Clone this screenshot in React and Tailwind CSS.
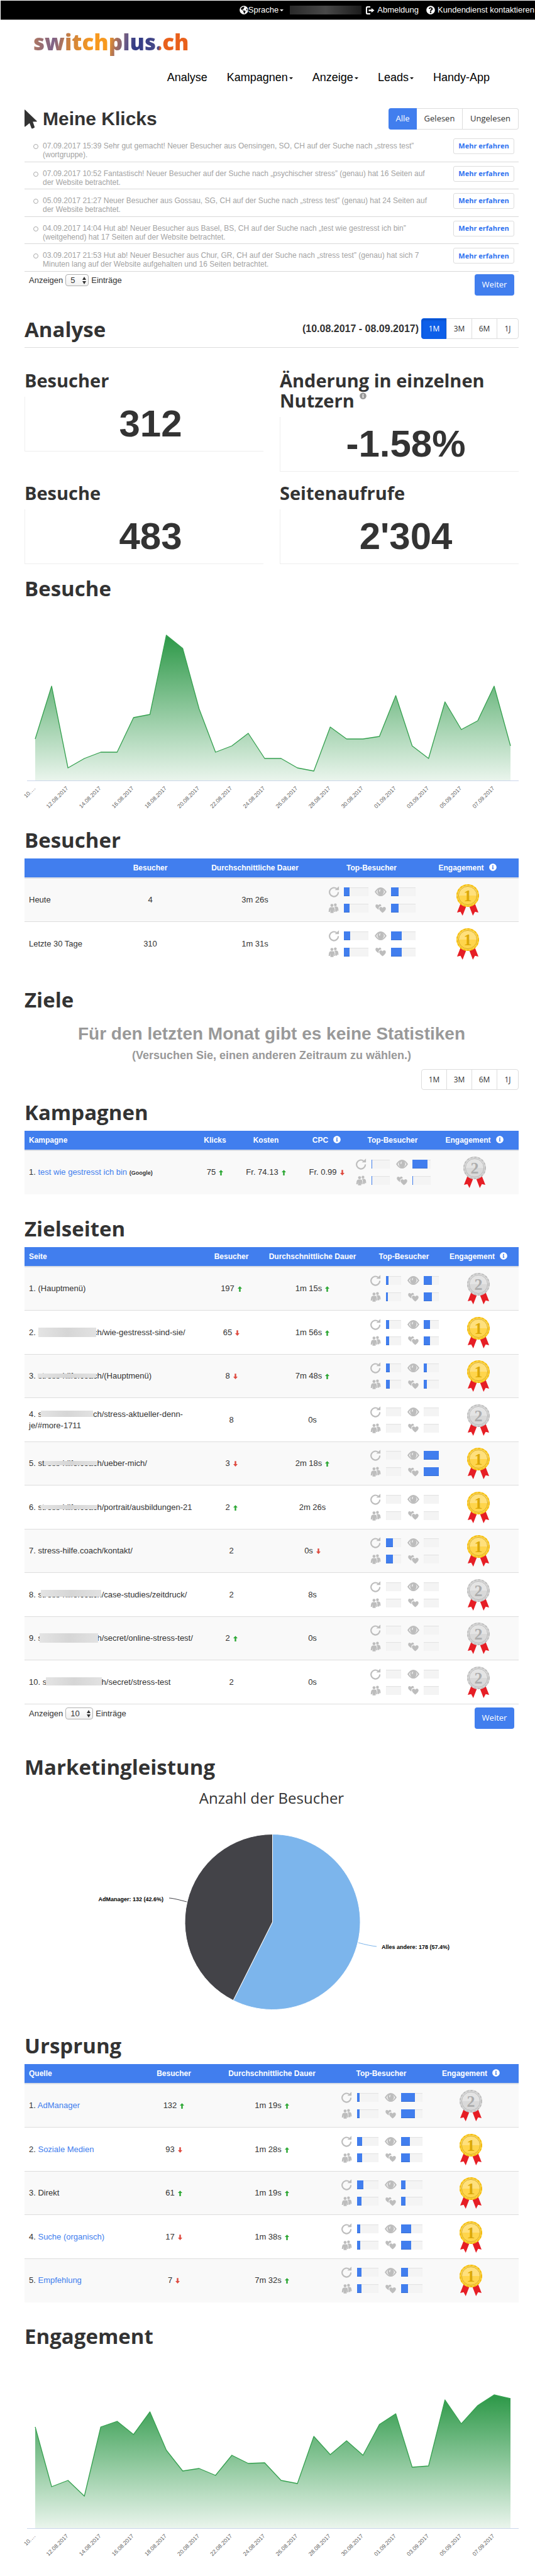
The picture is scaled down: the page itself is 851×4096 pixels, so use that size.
import React from "react";
import { FaGlobeAmericas, FaInfoCircle, FaQuestionCircle } from "react-icons/fa";

const clicks = [
  "07.09.2017 15:39 Sehr gut gemacht! Neuer Besucher aus Oensingen, SO, CH auf der Suche nach „stress test” (wortgruppe).",
  "07.09.2017 10:52 Fantastisch! Neuer Besucher auf der Suche nach „psychischer stress” (genau) hat 16 Seiten auf der Website betrachtet.",
  "05.09.2017 21:27 Neuer Besucher aus Gossau, SG, CH auf der Suche nach „stress test” (genau) hat 24 Seiten auf der Website betrachtet.",
  "04.09.2017 14:04 Hut ab! Neuer Besucher aus Basel, BS, CH auf der Suche nach „test wie gestresst ich bin” (weitgehend) hat 17 Seiten auf der Website betrachtet.",
  "03.09.2017 21:53 Hut ab! Neuer Besucher aus Chur, GR, CH auf der Suche nach „stress test” (genau) hat sich 7 Minuten lang auf der Website aufgehalten und 16 Seiten betrachtet.",
];

const axisDates = [
  "10.…", "12.08.2017", "14.08.2017", "16.08.2017", "18.08.2017", "20.08.2017", "22.08.2017", "24.08.2017",
  "26.08.2017", "28.08.2017", "30.08.2017", "01.09.2017", "03.09.2017", "05.09.2017", "07.09.2017",
];

/* Heights above the axis, in drawing units, one per day. */
const visitSeries = [
  66, 150, 20, 35, 45, 45, 100, 105, 231, 210, 114, 45, 55, 75, 35, 35, 20, 15, 85, 66, 66, 70, 135, 55, 35, 125, 81,
  95, 150, 55,
];
const engagementSeries = [
  161, 66, 76, 51, 161, 170, 149, 185, 124, 91, 95, 84, 116, 103, 104, 76, 71, 146, 117, 139, 116, 165, 182, 97, 99,
  204, 166, 195, 212, 206,
];

function Caret() {
  return (
    <svg viewBox="0 0 8 4" className="ml-[2px] w-[6px] h-[3px] inline-block align-middle" aria-hidden="true">
      <path d="M0 0h8L4 4z" fill="currentColor" />
    </svg>
  );
}

function LogOutIcon() {
  return (
    <svg viewBox="0 0 16 16" className="w-[15px] h-[15px]" fill="currentColor" aria-hidden="true">
      <path d="M8.500 1H3.500Q1 1 1 3.500v9Q1 15 3.500 15H8.500V12.800H4.200Q3.200 12.800 3.200 11.800V4.200Q3.200 3.200 4.200 3.200H8.500zM10.500 4.200V6.700H5.800v2.600h4.700v2.500L15.500 8z" />
    </svg>
  );
}

function CursorIcon() {
  return (
    <svg viewBox="0 0 20 31" className="w-5 h-[31px] shrink-0" fill="#333333" aria-hidden="true">
      <path d="M0 0.800Q0 0 .8.500L19.600 18.500Q20.200 19.500 19 19.500H13.200L16 27.800Q16.300 28.800 15.300 29.300L12.500 30.500Q11.500 30.800 11 29.800L8 21.800 1.300 27.300Q0 28 0 26.800z" />
    </svg>
  );
}

function RefreshIcon() {
  return (
    <svg viewBox="0 0 20 20" className="w-[18px] h-[18px]" aria-hidden="true">
      <path d="M14.800 4.300A7.800 7.800 0 1 0 18 10.500" fill="none" stroke="#bdbdbd" strokeWidth="2.400" />
      <path d="M19 .3V7H11.800z" fill="#bdbdbd" />
    </svg>
  );
}

function EyeIcon() {
  return (
    <svg viewBox="0 0 22 18" className="w-[19px] h-[16px]" aria-hidden="true">
      <path d="M0 9Q5 .8 11 .8T22 9Q17 17.200 11 17.200T0 9z" fill="#bdbdbd" />
      <path d="M3 9Q5.200 5.200 7.500 4.200A6 6 0 0 0 11 15Q6 15 3 9zM19 9Q16.800 5.200 14.500 4.200A6 6 0 0 1 11 15Q16 15 19 9z" fill="#f9f9f9" />
      <circle cx="11" cy="8.300" r="5" fill="#bdbdbd" />
      <path d="M10.800 4.200Q8 4.800 8.300 8Q9 9.300 10 8.200Q9.600 6 10.800 4.200z" fill="#f4f4f4" />
    </svg>
  );
}

function PeopleIcon() {
  return (
    <svg viewBox="0 0 20 18" className="w-[17px] h-[16px]" fill="#bdbdbd" aria-hidden="true">
      <circle cx="13.400" cy="2.800" r="2.600" />
      <path d="M12 6H16.200Q18.600 6.500 19 10L19.300 14H17.200L17 10.500 16.800 15.500H13.200V9.800Q13 7.500 11.400 6.500z" />
      <circle cx="7" cy="3.800" r="2.800" />
      <path d="M4.500 7.300H9.500Q12 7.500 12.300 11L12.500 16H10.600L10.300 11.500 10 18H4.200L3.800 11.500 3.300 16H.8L1.400 11Q1.900 7.600 4.500 7.300z" />
    </svg>
  );
}

function HeartsIcon() {
  return (
    <svg viewBox="0 0 20 17" className="w-[17px] h-[15px]" fill="#bdbdbd" aria-hidden="true">
      <path d="M6.300 11Q.2 7.200 .2 3.700Q.4 .8 3 .8Q5.200 .8 5.800 2.600Q6.600 .5 8.900 .6Q11 .9 11.200 3.300L11 4.200Q6.500 4.300 6.300 8.500z" />
      <path d="M13.500 16.600Q7.200 12 7.200 8.600Q7.400 5.600 10.300 5.500Q12.600 5.500 13.500 7.500Q14.500 5.400 16.800 5.500Q19.700 5.800 19.800 8.700Q19.600 12.200 13.500 16.600z" />
    </svg>
  );
}

function Medal({ place }) {
  const gold = place === 1;
  const rim = gold ? "#fbcf33" : "#d3d3d3";
  const dash = gold ? "#f3b90f" : "#bcbcbc";
  const face = gold ? "#ffd54c" : "#d9d9d9";
  const light = gold ? "#ffe07c" : "#e4e4e4";
  const ring = gold ? "#d8ad26" : "#b9b9b9";
  const digit = gold ? "#dba808" : "#adadad";
  return (
    <svg viewBox="0 0 36 50" className="mx-auto w-9 h-[50px] block" role="img" aria-label={`Platz ${place}`}>
      <path d="M6.500 31L1 45L6.500 43.700L9.800 50L16 34z" fill="#e61e25" />
      <path d="M29.500 31L35 45L29.500 43.700L26.200 50L20 34z" fill="#e61e25" />
      <circle cx="18" cy="18" r="18" fill={rim} />
      <circle cx="18" cy="18" r="17" fill="none" stroke={dash} strokeWidth="1.800" strokeDasharray="3 3.100" />
      <circle cx="18" cy="18" r="15.500" fill={face} />
      <path d="M2.500 18A15.500 15.500 0 0 1 33.500 18z" fill={light} />
      <circle cx="18" cy="18" r="14.600" fill="none" stroke={ring} strokeWidth="1" />
      <text x="18" y="27" textAnchor="middle" fontSize="26" fontWeight="700" fontFamily="'Liberation Serif', serif" fill={digit}>
        {place}
      </text>
    </svg>
  );
}

function Trend({ dir }) {
  const up = dir === "up";
  return (
    <svg viewBox="0 0 8 10" className="ml-[5px] w-[7px] h-[9px] inline-block align-[-1px]" role="img" aria-label={up ? "steigend" : "fallend"}>
      <path d={up ? "M4 0L8 4.500H5.400V10H2.600V4.500H0z" : "M4 10L0 5.500H2.600V0H5.400V5.500H8z"} fill={up ? "#2ea836" : "#de4a3f"} />
    </svg>
  );
}

function Value({ children, trend }) {
  return (
    <td className="p-0 text-center whitespace-nowrap">
      {children}
      {trend && <Trend dir={trend} />}
    </td>
  );
}

function Meter({ value, barClass }) {
  return (
    <div className={`${barClass} h-[14px] bg-[#f4f4f4] shadow-[inset_0_1px_1px_#e2e2e2]`} role="meter" aria-valuenow={value}>
      <div className="h-full bg-[#417eee] shadow-[inset_0_-1px_0_#3a70d3]" style={{ width: `${value}%` }} />
    </div>
  );
}

function TopVisitors({ values, barClass }) {
  const icons = [RefreshIcon, EyeIcon, PeopleIcon, HeartsIcon];
  return (
    <td className="p-0">
      <div className="grid grid-cols-[auto_auto] justify-center gap-x-[10px] gap-y-[12px]">
        {icons.map((Icon, i) => (
          <div key={i} className="flex items-center gap-[7px] h-[14px]">
            <span className="w-[19px] flex justify-center"><Icon /></span>
            <Meter value={values[i]} barClass={barClass} />
          </div>
        ))}
      </div>
    </td>
  );
}

function H2({ children }) {
  return <h2 className="font-['Open_Sans',sans-serif] font-bold text-[33px] leading-[40px]">{children}</h2>;
}

function PeriodButtons({ active }) {
  return (
    <div className="flex font-['Open_Sans',sans-serif] text-[12px]">
      {["1M", "3M", "6M", "1J"].map((label, i) => (
        <button
          key={label}
          type="button"
          className={`h-[33px] border -ml-px first:ml-0 first:rounded-l-[4px] last:rounded-r-[4px] ${
            i === 3 ? "w-[35px]" : "w-[41px]"
          } ${active === label ? "bg-[#0d5fe9] border-[#0d5fe9] text-white shadow-[inset_0_2px_3px_#0a4fc4]" : "bg-white border-[#dddddd]"}`}
        >
          {label}
        </button>
      ))}
    </div>
  );
}

function Pager({ id, size, selectClass }) {
  return (
    <div className="flex items-start justify-between pl-[7px] pr-[7px]">
      <div className="flex items-center gap-1 text-[13px] h-[19px]">
        <label htmlFor={id}>Anzeigen</label>
        <span className="relative">
          <select
            id={id}
            defaultValue={size}
            className={`${selectClass} block h-[19px] appearance-none rounded-[4px] border border-[#b0b0b0] bg-linear-to-b from-white to-[#f1f1f1] pl-[7px] text-[13px] leading-[16px]`}
          >
            <option>5</option>
            <option>10</option>
            <option>25</option>
          </select>
          <svg viewBox="0 0 6 12" className="absolute right-1 top-1 w-[6px] h-3 pointer-events-none" aria-hidden="true">
            <path d="M3 0L6 5H0zM3 12L0 7H6z" fill="#333333" />
          </svg>
        </span>
        <span>Einträge</span>
      </div>
      <button type="button" className="w-[63px] h-[34px] rounded-[4px] bg-[#417eee] text-white font-['Open_Sans',sans-serif] text-[13px]">
        Weiter
      </button>
    </div>
  );
}

function Info() {
  return <FaInfoCircle className="inline-block ml-2 mb-1 w-3 h-3" aria-label="Info" />;
}

function DataTable({ cols, heads, children }) {
  return (
    <table className="mt-[9px] w-full table-fixed border-separate border-spacing-0 text-[13px] leading-[18px]">
      <colgroup>
        {cols.map((c, i) => (
          <col key={i} className={c} />
        ))}
      </colgroup>
      <thead>
        <tr className="h-[32px] bg-[#417eee] text-white text-[12px]">
          {heads.map((h, i) => (
            <th
              key={i}
              scope="col"
              className={`p-0 font-bold whitespace-nowrap border-b-2 border-[#d8dce4] ${i === 0 ? "text-left pl-[7px]" : "text-center"}`}
            >
              {h}
              {(h === "Engagement" || h === "CPC") && <Info />}
            </th>
          ))}
        </tr>
      </thead>
      <tbody>{children}</tbody>
    </table>
  );
}

function Row({ children }) {
  return <tr className="odd:h-[69px] even:h-[70px] odd:bg-[#f9f9f9] *:border-b *:border-[#dddddd]">{children}</tr>;
}

function RowPlain({ children }) {
  return (
    <tr className="odd:h-[69px] even:h-[70px] odd:bg-[#f9f9f9] *:border-b *:border-[#dddddd] last:*:border-transparent">{children}</tr>
  );
}

function First({ children }) {
  return <td className="p-0 pl-[7px] pr-2">{children}</td>;
}

function MedalCell({ place }) {
  return (
    <td className="p-0">
      <Medal place={place} />
    </td>
  );
}

function AreaChart({ id, data, label }) {
  const step = 26.07;
  const base = 285;
  const pts = data.map((v, i) => `${(17 + i * step).toFixed(1)} ${base - v}`);
  const last = (17 + (data.length - 1) * step).toFixed(1);
  return (
    <svg viewBox="0 0 786 340" className="block w-full overflow-visible" role="img" aria-label={label}>
      <defs>
        <linearGradient id={id} x1="0" y1="0" x2="0" y2="1">
          <stop offset="0" stopColor="#2c9847" />
          <stop offset="1" stopColor="#2c9847" stopOpacity="0.100" />
        </linearGradient>
      </defs>
      <path d={`M17 ${base}L${pts.join("L")}L${last} ${base}z`} fill={`url(#${id})`} />
      <path d={`M${pts.join("L")}`} fill="none" stroke="#35a04f" strokeWidth="1.300" strokeLinejoin="round" />
      <path d="M4 285.500H786" stroke="#ccd6eb" strokeWidth="1" />
      {axisDates.map((d, i) => {
        const x = (18 + i * 2 * step).toFixed(1);
        return (
          <text key={d} x={x} y="298" textAnchor="end" fontSize="9" fill="#666666" transform={`rotate(-45 ${x} 298)`}>
            {d}
          </text>
        );
      })}
    </svg>
  );
}

function StatCard({ title, value, info }) {
  return (
    <div>
      <h3 className="font-['Open_Sans',sans-serif] font-bold text-[29px] leading-[32px]">
        {title}
        {info && <FaInfoCircle className="inline-block ml-2 w-[11px] h-[11px] align-[13px] text-[#999999]" aria-label="Info" />}
      </h3>
      <div className="mt-[10px] h-[87px] flex items-center justify-center pl-5 border-l border-b border-[#eeeeee] font-bold text-[60px] leading-none">
        {value}
      </div>
    </div>
  );
}

function Masked({ cover }) {
  return (
    <span className="relative">
      stress-hilfe.coach
      <span className={`absolute ${cover} bg-linear-to-r from-[#e4e4e4] via-[#d6d6d6] to-[#e2e2e2]`} />
    </span>
  );
}

const pages = [
  { n: 1, path: "(Hauptmenü)", v: "197", vt: "up", d: "1m 15s", dt: "up", m: [20, 58, 15, 58], p: 2 },
  { n: 2, cover: "left-px top-0 w-[92px] h-[15px]", path: "/wie-gestresst-sind-sie/", v: "65", vt: "down", d: "1m 56s", dt: "up", m: [22, 44, 22, 44], p: 1 },
  { n: 3, cover: "left-0 top-1 w-[93px] h-[7px]", path: "/(Hauptmenü)", v: "8", vt: "down", d: "7m 48s", dt: "up", m: [26, 24, 26, 24], p: 1 },
  { n: 4, cover: "left-[5px] top-[2px] w-[83px] h-[10px]", path: "/stress-aktueller-denn-", rest: "je/#more-1711", v: "8", d: "0s", m: [0, 0, 0, 0], p: 2 },
  { n: 5, cover: "left-[10px] top-1 w-[84px] h-[7px]", path: "/ueber-mich/", v: "3", vt: "down", d: "2m 18s", dt: "up", m: [0, 100, 0, 100], p: 1 },
  { n: 6, cover: "left-[5px] top-1 w-[90px] h-[7px]", path: "/portrait/ausbildungen-21", v: "2", vt: "up", d: "2m 26s", m: [0, 0, 0, 0], p: 1 },
  { n: 7, path: "stress-hilfe.coach/kontakt/", v: "2", d: "0s", dt: "down", m: [48, 0, 48, 0], p: 1 },
  { n: 8, cover: "left-[5px] top-0 w-[96px] h-[11px]", path: "/case-studies/zeitdruck/", v: "2", d: "8s", m: [0, 0, 0, 0], p: 2 },
  { n: 9, cover: "left-[3px] top-0 w-[93px] h-[15px]", path: "/secret/online-stress-test/", v: "2", vt: "up", d: "0s", m: [0, 0, 0, 0], p: 2 },
  { n: 10, cover: "left-[5px] top-0 w-[89px] h-[13px]", path: "/secret/stress-test", v: "2", d: "0s", m: [0, 0, 0, 0], p: 2 },
];

const sources = [
  { n: 1, name: "AdManager", link: true, v: "132", vt: "up", d: "1m 19s", m: [14, 66, 14, 66], p: 2 },
  { n: 2, name: "Soziale Medien", link: true, v: "93", vt: "down", d: "1m 28s", m: [26, 43, 26, 43], p: 1 },
  { n: 3, name: "Direkt", v: "61", vt: "up", d: "1m 19s", m: [32, 21, 23, 21], p: 1 },
  { n: 4, name: "Suche (organisch)", link: true, v: "17", vt: "down", d: "1m 38s", m: [17, 48, 17, 48], p: 1 },
  { n: 5, name: "Empfehlung", link: true, v: "7", vt: "down", d: "7m 32s", m: [21, 33, 21, 33], p: 1 },
];

export default function App() {
  return (
    <div className="bg-white text-[#333333] font-['Liberation_Sans',sans-serif]">
      <div className="pt-px pl-px">
        <div className="h-[31px] bg-black border-b border-[#bbbbbb] text-white text-[13px] flex items-center justify-end whitespace-nowrap pr-px">
          <button type="button" className="flex items-center">
            <FaGlobeAmericas className="w-[14px] h-[14px]" />
            Sprache
            <Caret />
          </button>
          <span className="ml-[10px] w-[114px] h-[14px] bg-linear-to-r from-[#2a2a2a] via-[#484848] to-[#1c1c1c]" />
          <a href="#abmeldung" className="ml-[6px] flex items-center gap-1">
            <LogOutIcon />
            Abmeldung
          </a>
          <a href="#kundendienst" className="ml-3 flex items-center gap-1">
            <FaQuestionCircle className="w-[14px] h-[14px]" />
            Kundendienst kontaktieren
          </a>
        </div>
      </div>

      <div className="pl-[39px] pr-[26px]">
        <header className="pt-[12px]">
          <a
            href="#start"
            className="ml-[14px] inline-block font-['Open_Sans',sans-serif] font-extrabold text-[35px] leading-[46px] text-transparent bg-clip-text bg-[linear-gradient(100deg,#b57a5c_0%,#7f6288_14%,#c87f42_23%,#f7991f_38%,#f7991f_48%,#a8705c_53%,#6a5a86_59%,#2f3a86_65%,#4a4a88_80%,#e9601b_81%,#e9601b_100%)]"
          >
            switchplus.ch
          </a>
          <nav className="mt-[22px] pr-[46px] flex justify-end gap-[31px] text-[18px] leading-[22px] text-black">
            <a href="#analyse">Analyse</a>
            <a href="#kampagnen">Kampagnen<Caret /></a>
            <a href="#anzeige">Anzeige<Caret /></a>
            <a href="#leads">Leads<Caret /></a>
            <a href="#app">Handy-App</a>
          </nav>
        </header>

        <section className="mt-[38px]">
          <div className="flex items-center justify-between">
            <div className="flex items-center gap-[9px]">
              <CursorIcon />
              <h1 className="font-bold text-[30px] leading-[34px]">Meine Klicks</h1>
            </div>
            <div className="flex h-[34px] font-['Open_Sans',sans-serif] text-[13px]">
              <button type="button" className="w-[45px] rounded-l-[4px] bg-[#417eee] text-white">Alle</button>
              <button type="button" className="w-[73px] border border-l-0 border-[#dddddd]">Gelesen</button>
              <button type="button" className="w-[89px] rounded-r-[4px] border border-l-0 border-[#dddddd]">Ungelesen</button>
            </div>
          </div>
          <ul className="mt-[8px] h-[218px] grid auto-rows-fr">
            {clicks.map((c) => (
              <li key={c} className="flex items-start border-b border-[#d9d9d9] pt-[6px] pl-[14px] pr-[7px]">
                <span className="mt-[9px] w-2 h-2 rounded-full border border-[#aaaaaa] shrink-0" />
                <p className="ml-[7px] mt-[5px] flex-1 max-w-[620px] text-[12px] leading-[14px] text-[#a3a3a3]">{c}</p>
                <button
                  type="button"
                  className="ml-auto w-[97px] h-[25px] shrink-0 rounded-[3px] border border-[#dddddd] text-[#2f73f0] font-['Open_Sans',sans-serif] font-bold text-[11px]"
                >
                  Mehr erfahren
                </button>
              </li>
            ))}
          </ul>
          <div className="mt-1"><Pager id="clicks-size" size="5" selectClass="w-[37px]" /></div>
        </section>

        <section className="mt-[34px]">
          <div className="h-[49px] flex items-start justify-between border-b border-[#dddddd]">
            <H2>Analyse</H2>
            <div className="mt-[2px] flex items-center gap-1">
              <span className="font-bold text-[16px]">(10.08.2017 - 08.09.2017)</span>
              <PeriodButtons active="1M" />
            </div>
          </div>
          <div className="mt-[36px] grid grid-cols-2 gap-x-[26px] gap-y-[18px]">
            <StatCard title="Besucher" value="312" />
            <StatCard title="Änderung in einzelnen Nutzern" value="-1.58%" info />
            <StatCard title="Besuche" value="483" />
            <StatCard title="Seitenaufrufe" value="2'304" />
          </div>
        </section>

        <section className="mt-[19px]">
          <H2>Besuche</H2>
          <AreaChart id="fill-visits" data={visitSeries} label="Besuche pro Tag" />
        </section>

        <section className="mt-[20px]">
          <H2>Besucher</H2>
          <DataTable
            cols={["w-[148px]", "w-[104px]", "w-[229px]", "w-[142px]", "w-[163px]"]}
            heads={["", "Besucher", "Durchschnittliche Dauer", "Top-Besucher", "Engagement"]}
          >
            <RowPlain>
              <First>Heute</First>
              <Value>4</Value>
              <Value>3m 26s</Value>
              <TopVisitors values={[24, 32, 24, 32]} barClass="w-[39px]" />
              <MedalCell place={1} />
            </RowPlain>
            <RowPlain>
              <First>Letzte 30 Tage</First>
              <Value>310</Value>
              <Value>1m 31s</Value>
              <TopVisitors values={[25, 43, 24, 43]} barClass="w-[39px]" />
              <MedalCell place={1} />
            </RowPlain>
          </DataTable>
        </section>

        <section className="mt-[34px]">
          <H2>Ziele</H2>
          <p className="mt-[18px] text-center font-bold text-[28px] leading-[32px] text-[#999999]">
            Für den letzten Monat gibt es keine Statistiken
          </p>
          <p className="mt-[6px] text-center font-bold text-[18px] leading-[24px] text-[#999999]">
            (Versuchen Sie, einen anderen Zeitraum zu wählen.)
          </p>
          <div className="mt-[10px] flex justify-end"><PeriodButtons /></div>
        </section>

        <section className="mt-[16px]">
          <H2>Kampagnen</H2>
          <DataTable
            cols={["w-[273px]", "w-[60px]", "w-[102px]", "w-[91px]", "w-[119px]", "w-[141px]"]}
            heads={["Kampagne", "Klicks", "Kosten", "CPC", "Top-Besucher", "Engagement"]}
          >
            <RowPlain>
              <First>
                1. <a href="#kampagne-1" className="text-[#417eee]">test wie gestresst ich bin</a>{" "}
                <b className="text-[9px]">(Google)</b>
              </First>
              <Value trend="up">75</Value>
              <Value trend="up">Fr. 74.13</Value>
              <Value trend="down">Fr. 0.99</Value>
              <TopVisitors values={[5, 86, 5, 5]} barClass="w-[29px]" />
              <MedalCell place={2} />
            </RowPlain>
          </DataTable>
        </section>

        <section className="mt-[35px]">
          <H2>Zielseiten</H2>
          <DataTable
            cols={["w-[291px]", "w-[76px]", "w-[182px]", "w-[109px]", "w-[128px]"]}
            heads={["Seite", "Besucher", "Durchschnittliche Dauer", "Top-Besucher", "Engagement"]}
          >
            {pages.map((r) => (
              <Row key={r.n}>
                <First>
                  {r.n}. {r.cover && <Masked cover={r.cover} />}
                  {r.path}
                  {r.rest && <span className="block">{r.rest}</span>}
                </First>
                <Value trend={r.vt}>{r.v}</Value>
                <Value trend={r.dt}>{r.d}</Value>
                <TopVisitors values={r.m} barClass="w-[24px]" />
                <MedalCell place={r.p} />
              </Row>
            ))}
          </DataTable>
          <div className="mt-[5px]"><Pager id="pages-size" size="10" selectClass="w-[44px]" /></div>
        </section>

        <section className="mt-[41px]">
          <H2>Marketingleistung</H2>
          <h3 className="mt-[13px] text-center font-['Open_Sans',sans-serif] text-[24px] leading-[32px]">Anzahl der Besucher</h3>
          <svg viewBox="0 0 786 350" className="block w-full" role="img" aria-label="Anzahl der Besucher nach Quelle">
            <path d="M394.500 181V41.500A139.500 139.500 0 1 1 332 305.700z" fill="#7cb5ec" stroke="#ffffff" strokeWidth="1" />
            <path d="M394.500 181L332 305.700A139.500 139.500 0 0 1 394.500 41.500z" fill="#434348" stroke="#ffffff" strokeWidth="1" />
            <path d="M230 143Q236 143 258 149" fill="none" stroke="#434348" strokeWidth="1" />
            <path d="M531 214Q549 219 560 220" fill="none" stroke="#7cb5ec" strokeWidth="1" />
            <text x="221" y="148" textAnchor="end" fontSize="9" fontWeight="700" fill="#000000">AdManager: 132 (42.6%)</text>
            <text x="568" y="224" fontSize="9" fontWeight="700" fill="#000000">Alles andere: 178 (57.4%)</text>
          </svg>
        </section>

        <section className="mt-[8px]">
          <H2>Ursprung</H2>
          <DataTable
            cols={["w-[189px]", "w-[97px]", "w-[215px]", "w-[133px]", "w-[152px]"]}
            heads={["Quelle", "Besucher", "Durchschnittliche Dauer", "Top-Besucher", "Engagement"]}
          >
            {sources.map((r) => (
              <RowPlain key={r.n}>
                <First>
                  {r.n}. {r.link ? <a href={`#quelle-${r.n}`} className="text-[#417eee]">{r.name}</a> : r.name}
                </First>
                <Value trend={r.vt}>{r.v}</Value>
                <Value trend="up">{r.d}</Value>
                <TopVisitors values={r.m} barClass="w-[34px]" />
                <MedalCell place={r.p} />
              </RowPlain>
            ))}
          </DataTable>
        </section>

        <section className="mt-[34px] pb-5">
          <H2>Engagement</H2>
          <AreaChart id="fill-engagement" data={engagementSeries} label="Engagement pro Tag" />
        </section>
      </div>
    </div>
  );
}
